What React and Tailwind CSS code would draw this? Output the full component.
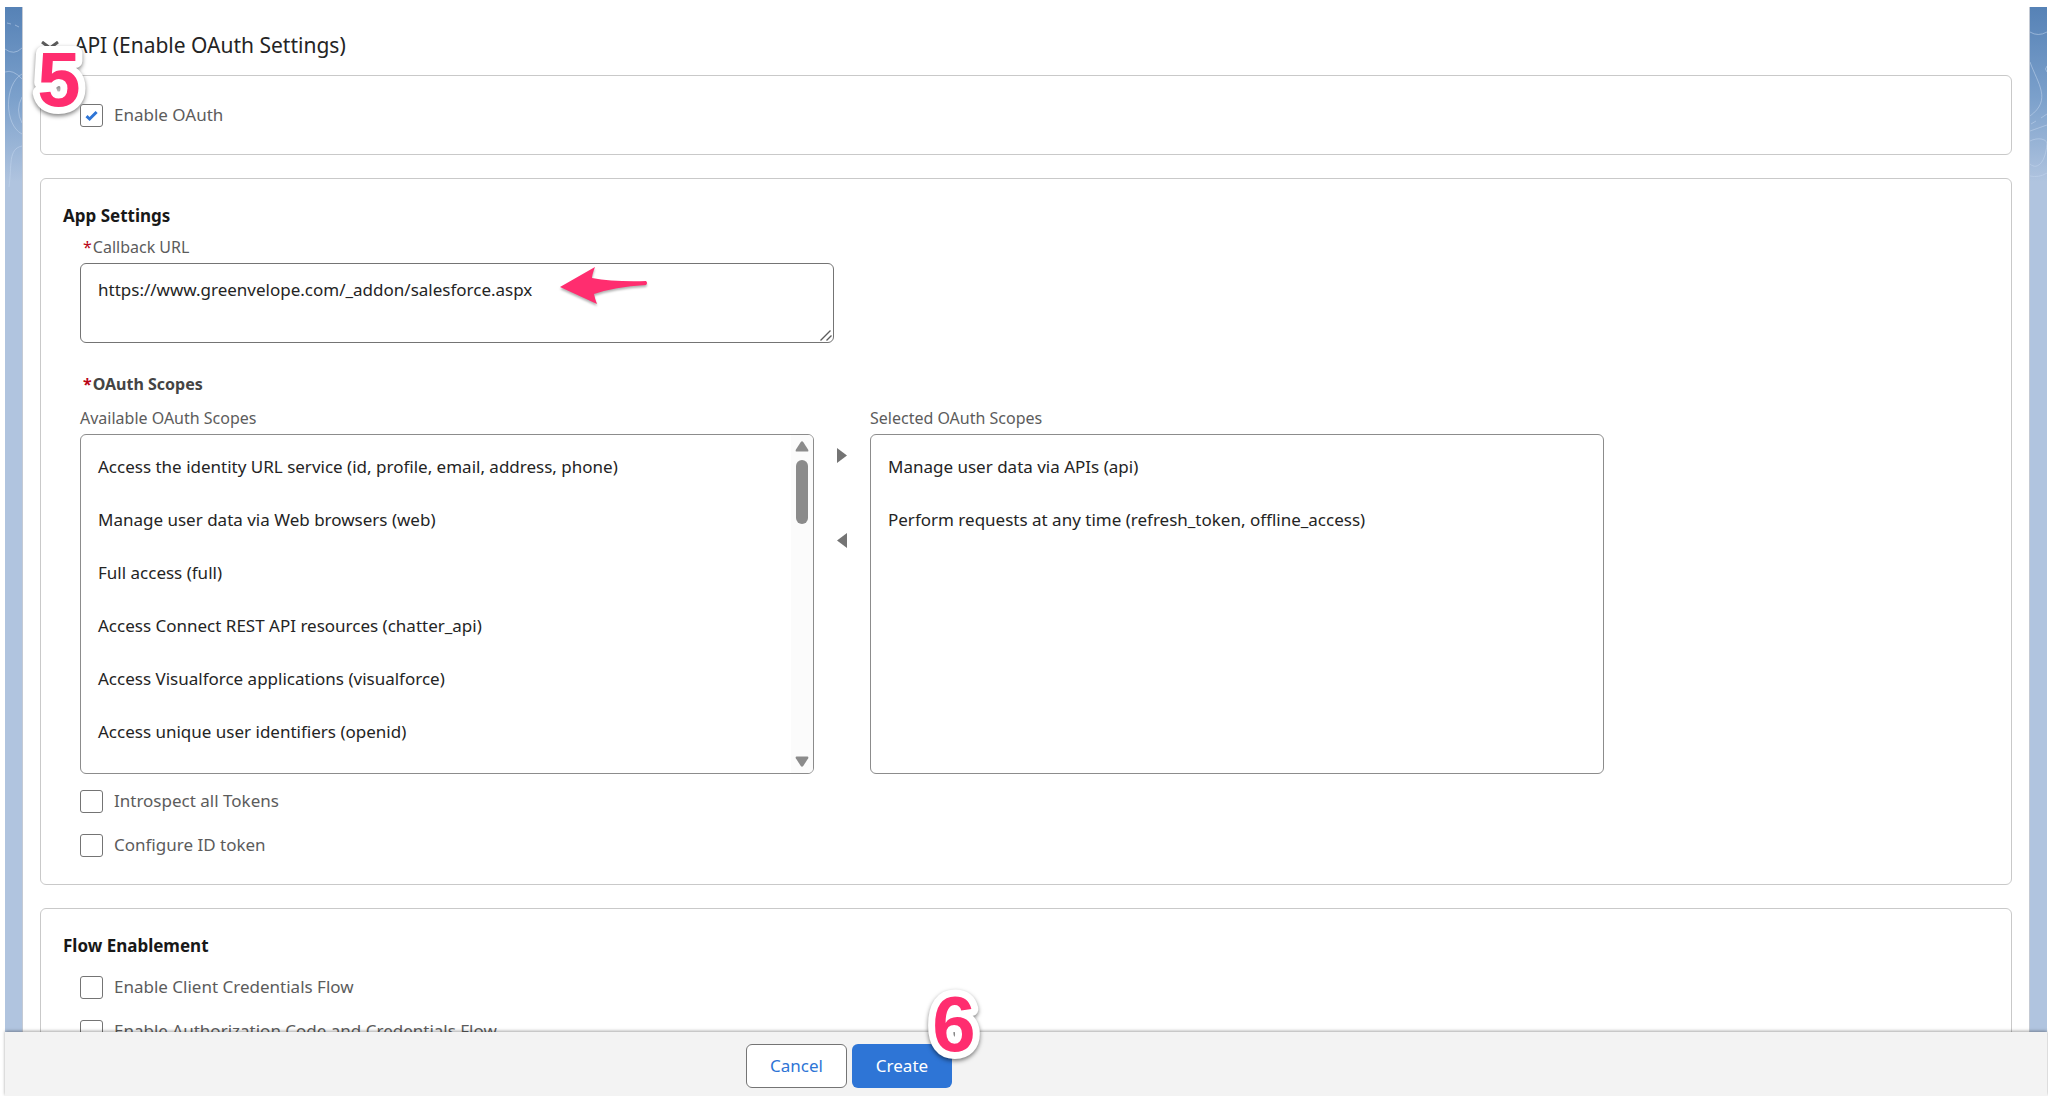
import { useState } from "react";

const AVAILABLE_SCOPES = [
  "Access the identity URL service (id, profile, email, address, phone)",
  "Manage user data via Web browsers (web)",
  "Full access (full)",
  "Access Connect REST API resources (chatter_api)",
  "Access Visualforce applications (visualforce)",
  "Access unique user identifiers (openid)",
];

const SELECTED_SCOPES = [
  "Manage user data via APIs (api)",
  "Perform requests at any time (refresh_token, offline_access)",
];

const Card = ({ children, className }) => (
  <section className={`rounded-md border border-[#c9c9c9] pl-[22px] pr-6 ${className}`}>
    {children}
  </section>
);

const Checkbox = ({ id, label, defaultChecked }) => (
  <div className="flex items-center gap-[11px]">
    <span className="relative flex h-6 items-center">
      <input
        id={id}
        type="checkbox"
        defaultChecked={defaultChecked}
        className="peer size-[23px] appearance-none rounded-[3px] border border-[#747474] bg-white"
      />
      <svg
        viewBox="0 0 23 23"
        className="pointer-events-none absolute left-0 size-[23px] opacity-0 peer-checked:opacity-100"
        fill="none"
        stroke="#2e75d6"
        strokeWidth="3"
      >
        <path d="M6.5 12.2 L9.6 15 L16.6 8" />
      </svg>
    </span>
    <label htmlFor={id} className="text-[17px] leading-6 text-[#5c5c5c]">
      {label}
    </label>
  </div>
);

const ScopeList = ({ id, label, scopes, scrollable }) => (
  <div className="min-w-0 flex-1">
    <div id={id} className="mb-1.5 text-base leading-5 text-[#5c5c5c]">
      {label}
    </div>
    <div className="flex h-[340px] overflow-hidden rounded-md border border-[#8c8c8c]">
      <ul role="listbox" aria-labelledby={id} className="min-w-0 flex-1 pt-[5px]">
        {scopes.map((scope) => (
          <li
            key={scope}
            role="option"
            aria-selected="false"
            className="truncate px-[17px] text-[17px] leading-[53px] text-[#242424]"
          >
            {scope}
          </li>
        ))}
      </ul>
      {scrollable && (
        <div className="flex w-[22px] flex-col items-center bg-[#fbfbfb] py-1.5">
          <svg viewBox="0 0 14 11" className="h-[11px] w-3.5" fill="#8b8b8b">
            <path d="M5.8 .9 Q7 -.4 8.2 .9 L13.2 8.8 Q13.8 10.4 12.4 10.6 H1.6 Q.2 10.4 .8 8.8 Z" />
          </svg>
          <div className="mt-2 h-16 w-3 rounded-full bg-[#8b8b8b]" />
          <svg viewBox="0 0 14 11" className="mt-auto h-[11px] w-3.5" fill="#8b8b8b">
            <path d="M5.8 10.1 Q7 11.4 8.2 10.1 L13.2 2.2 Q13.8 .6 12.4 .4 H1.6 Q.2 .6 .8 2.2 Z" />
          </svg>
        </div>
      )}
    </div>
  </div>
);

const StepBadge = ({ number, className }) => (
  <svg
    viewBox="0 0 64 80"
    className={`pointer-events-none absolute h-20 w-16 overflow-visible drop-shadow-[0_2px_2px_rgba(0,0,0,0.5)] ${className}`}
  >
    <text
      x="32"
      y="67"
      textAnchor="middle"
      fill="#ff2d6f"
      stroke="#fff"
      strokeWidth="14"
      strokeLinejoin="round"
      paintOrder="stroke"
      className="font-['Liberation_Sans',sans-serif] text-[78px] font-bold"
    >
      {number}
    </text>
  </svg>
);

const LeftStrip = () => (
  <div className="w-[18px] shrink-0 border-r border-[#c4cad4] bg-[#b0c4df] bg-[linear-gradient(#5682b6,#7ba0cb_90px,#b0c4df_175px)]">
    <svg viewBox="0 0 17 190" className="h-[190px] w-[17px]" fill="none" stroke="#c3d5ec" strokeOpacity=".55">
      <path d="M2 16 L6 17 M10 18 L14 20" />
      <path d="M0 42 Q9 49 17 41" />
      <path d="M0 65 Q8 62 17 72" />
      <path d="M17 67 C-1 77 -1 118 17 127" />
      <path d="M17 90 Q10 103 17 116" />
      <path d="M17 139 C3 142 7 158 4 180" />
    </svg>
  </div>
);

const RightStrip = () => (
  <div className="w-[18px] shrink-0 border-l border-[#c4cad4] bg-[#b0c4df] bg-[linear-gradient(#5682b6,#7ba0cb_90px,#b0c4df_175px)]">
    <svg viewBox="0 0 17 190" className="h-[190px] w-[17px]" fill="none" stroke="#c3d5ec" strokeOpacity=".55">
      <path d="M0 25 Q8 30 17 25" />
      <path d="M0 55 C8 77 22 93 0 109" />
      <path d="M17 59 Q14 62 17 65" />
      <path d="M1 117 L6 114 M11 111 L17 107" />
      <path d="M0 124 L17 118" />
      <path d="M0 134 C8 130 16 132 17 136 C16 154 8 164 0 157" />
      <path d="M0 169 Q9 171 17 166" />
    </svg>
  </div>
);

const App = () => {
  const [callbackUrl, setCallbackUrl] = useState(
    "https://www.greenvelope.com/_addon/salesforce.aspx"
  );

  return (
    <div className="flex h-screen flex-col bg-white pt-[7px] pr-px pl-[5px] font-['Noto_Sans',sans-serif]">
      <div className="flex min-h-0 flex-1 overflow-hidden">
        <LeftStrip />

        <main className="min-w-0 flex-1 px-[17px]">
          {/* Section header */}
          <h2 className="relative flex items-center gap-3.5 pt-6 pb-4 text-[21px] leading-7 text-[#242424]">
            <svg viewBox="0 0 20 8" className="h-2 w-5" fill="none" stroke="#5c5c5c" strokeWidth="3">
              <path d="M2 1 L10 7 L18 1" />
            </svg>
            API (Enable OAuth Settings)
            <StepBadge number="5" className="-left-[13px] top-8" />
          </h2>

          <Card className="py-[27px]">
            <div className="pl-[17px]">
              <Checkbox id="enable-oauth" label="Enable OAuth" defaultChecked />
            </div>
          </Card>

          {/* App Settings */}
          <Card className="mt-[23px] pt-[25px] pb-[27px]">
            <h3 className="text-[17px] leading-6 font-bold text-[#181818]">App Settings</h3>

            <div className="pl-[17px]">
              <label
                htmlFor="callback-url"
                className="mt-[9px] mb-1.5 flex gap-px pl-[3px] text-base leading-5 text-[#5c5c5c]"
              >
                <span className="text-[#ba0517]">*</span>
                Callback URL
              </label>
              <div className="relative max-w-[754px]">
                <textarea
                  id="callback-url"
                  value={callbackUrl}
                  onChange={(e) => setCallbackUrl(e.target.value)}
                  className="block h-20 w-full resize-none rounded-md border border-[#747474] px-[17px] py-3 text-[17px] leading-7 text-[#242424]"
                />
                {/* Resize grip */}
                <svg
                  viewBox="0 0 12 11"
                  className="pointer-events-none absolute right-0.5 bottom-0.5 h-[11px] w-3"
                  stroke="#5c5c5c"
                  strokeWidth="1.4"
                >
                  <path d="M.5 10.5 L10.5 .5 M6.5 10.5 L11.5 5.5" />
                </svg>
                <svg
                  viewBox="0 0 88 40"
                  className="pointer-events-none absolute top-1 left-[480px] h-10 w-[88px] drop-shadow-[0_2px_1px_rgba(0,0,0,0.3)]"
                  fill="#ff2d6f"
                >
                  <path d="M0 20 L35 0 Q32 8 32 11 Q54 15 86 14 Q88 16 86 18 Q54 20 34 27 Q35 32 37 37 Z" />
                </svg>
              </div>

              <h4 className="mt-[31px] flex gap-px pl-[3px] text-base leading-5 font-bold text-[#444]">
                <span className="text-[#ba0517]">*</span>
                OAuth Scopes
              </h4>

              <div className="mt-3.5 flex max-w-[1524px]">
                <ScopeList
                  id="available-scopes"
                  label="Available OAuth Scopes"
                  scopes={AVAILABLE_SCOPES}
                  scrollable
                />
                <div className="flex w-14 flex-col items-center pt-[34px]">
                  <button type="button" aria-label="Add scope" className="flex h-[85px] items-start pt-1.5">
                    <svg viewBox="0 0 10 15" className="h-[15px] w-2.5" fill="#747474">
                      <path d="M0 0 L10 7.5 L0 15 Z" />
                    </svg>
                  </button>
                  <button type="button" aria-label="Remove scope" className="flex h-[85px] items-start pt-1.5">
                    <svg viewBox="0 0 10 15" className="h-[15px] w-2.5" fill="#747474">
                      <path d="M10 0 L0 7.5 L10 15 Z" />
                    </svg>
                  </button>
                </div>
                <ScopeList
                  id="selected-scopes"
                  label="Selected OAuth Scopes"
                  scopes={SELECTED_SCOPES}
                />
              </div>

              <div className="mt-[15px] flex flex-col gap-5">
                <Checkbox id="introspect" label="Introspect all Tokens" />
                <Checkbox id="configure-id" label="Configure ID token" />
              </div>
            </div>
          </Card>

          {/* Flow Enablement */}
          <Card className="mt-[23px] pt-[25px] pb-[27px]">
            <h3 className="text-[17px] leading-6 font-bold text-[#181818]">Flow Enablement</h3>
            <div className="mt-[17px] flex flex-col gap-5 pl-[17px]">
              <Checkbox id="client-credentials" label="Enable Client Credentials Flow" />
              <Checkbox
                id="auth-code"
                label="Enable Authorization Code and Credentials Flow"
              />
            </div>
          </Card>
        </main>

        <RightStrip />
      </div>

      <footer className="relative flex h-16 shrink-0 items-start justify-center gap-[5px] bg-[#f3f3f3] pt-3 pr-[354px] shadow-[0_-1px_3px_rgba(0,0,0,0.35)]">
        <button
          type="button"
          className="h-11 w-[101px] rounded-md border border-[#747474] bg-white text-[17px] text-[#2e75d6]"
        >
          Cancel
        </button>
        <div className="relative">
          <button
            type="button"
            className="h-11 w-[100px] rounded-md bg-[#2e75d6] text-[17px] text-white"
          >
            Create
          </button>
          <StepBadge number="6" className="-top-[60px] left-[70px]" />
        </div>
      </footer>
    </div>
  );
};

export default App;
